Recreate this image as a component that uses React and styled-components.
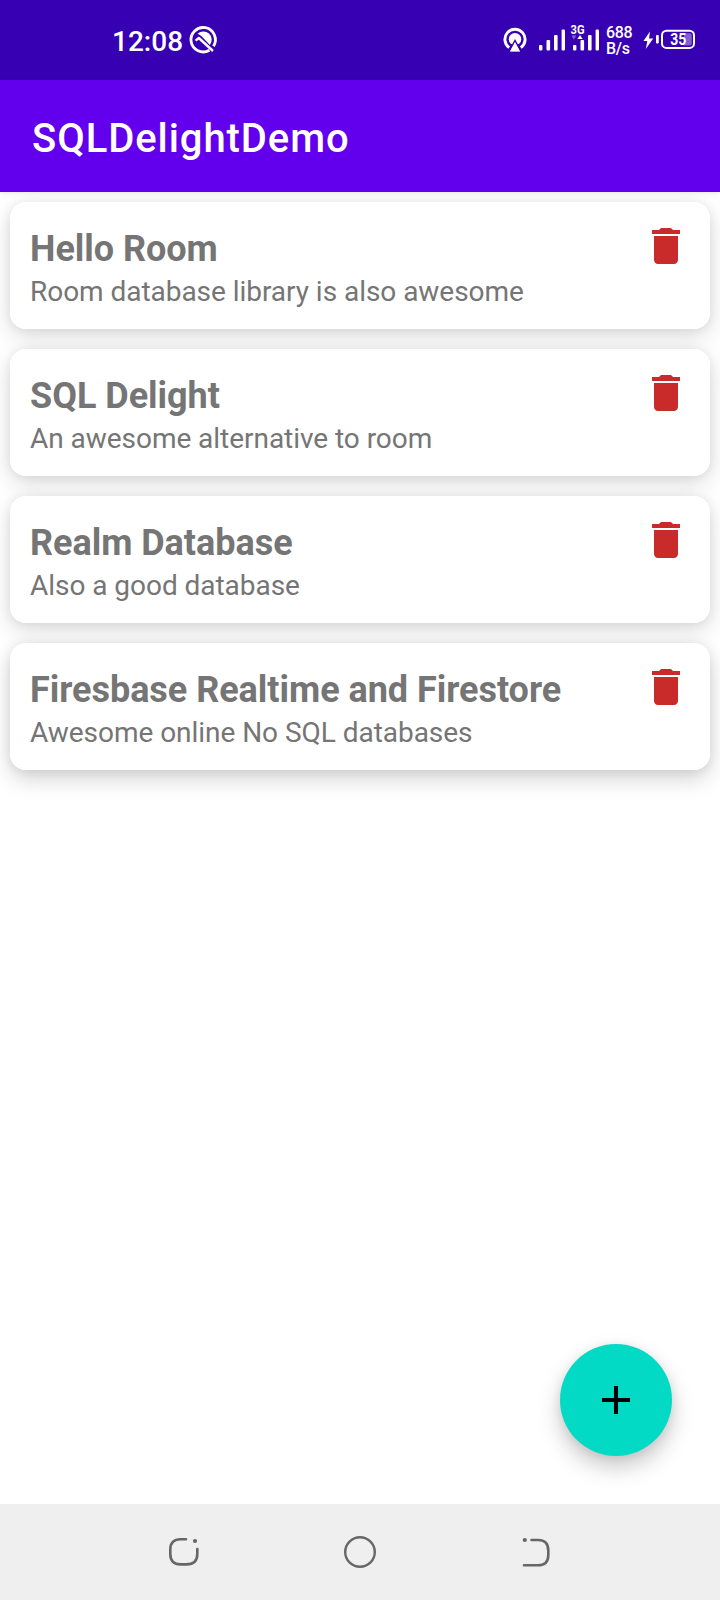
import React from 'react';
import styled, { createGlobalStyle } from 'styled-components';

const GlobalStyle = createGlobalStyle`
  * { box-sizing: border-box; }
  body { margin: 0; background: #fff; font-family: Roboto, sans-serif; }
`;

const Screen = styled.div`
  width: 720px;
  height: 1600px;
  display: flex;
  flex-direction: column;
  background: #fff;
  overflow: hidden;
`;

const StatusBar = styled.header`
  height: 80px;
  flex: none;
  display: flex;
  align-items: center;
  padding: 0 24px 0 112px;
  background: #3700b3;
  color: #fff;
`;

const Clock = styled.span`
  font-size: 28px;
  line-height: 32px;
  font-weight: 500;
  width: 77px;
  padding-top: 4px;
`;

const StatusIcons = styled.div`
  margin-left: auto;
  display: flex;
  align-items: center;
`;

const Glyph = styled.svg`
  display: block;
  flex: none;
  overflow: visible;
  margin-left: ${(p) => p.$gap || 0}px;
`;

const NetSpeed = styled.div`
  width: 37px;
  margin-left: 7px;
  padding-top: 1px;
  font-size: 16px;
  line-height: 16px;
  font-weight: 500;
  letter-spacing: -0.35px;
`;

const AppBar = styled.div`
  position: relative;
  z-index: 1;
  height: 112px;
  flex: none;
  display: flex;
  align-items: center;
  padding: 0 32px;
  background: #6200ee;
  box-shadow: 0 1px 5px rgba(0, 0, 0, 0.1);
`;

const AppTitle = styled.h1`
  margin: 0;
  color: #fff;
  font-size: 40px;
  line-height: 48px;
  padding-top: 6px;
  font-weight: 500;
  letter-spacing: 0.93px;
`;

const Content = styled.main`
  flex: 1;
  display: flex;
  flex-direction: column;
  justify-content: space-between;
`;

const NoteList = styled.ul`
  isolation: isolate;
  list-style: none;
  margin: 0;
  padding: 10px;
  display: flex;
  flex-direction: column;
  gap: 20px;
`;

const NoteCard = styled.li`
  position: relative;
  height: 127px;
  display: flex;
  justify-content: space-between;
  padding: 20px 20px 0;
  border-radius: 16px;
  background: #fff;
  color: #757575;

  &::before {
    content: '';
    position: absolute;
    inset: 0;
    z-index: -1;
    border-radius: inherit;
    box-shadow: 0 8px 24px rgba(0, 0, 0, 0.13), 0 1px 12px rgba(0, 0, 0, 0.08);
  }

  &:last-child::before {
    box-shadow: 0 9px 22px rgba(0, 0, 0, 0.17), 0 1px 12px rgba(0, 0, 0, 0.08);
  }
`;

const NoteTitle = styled.h2`
  margin: 5px 0 0;
  font-size: 36px;
  line-height: 44px;
  font-weight: 700;
  letter-spacing: -0.03px;
`;

const NoteText = styled.p`
  margin: 2px 0 0;
  font-size: 28px;
  line-height: 38px;
  letter-spacing: -0.04px;
`;

const DeleteButton = styled.button`
  width: 48px;
  height: 48px;
  padding: 0;
  border: 0;
  background: none;
`;

const AddButton = styled.button`
  align-self: flex-end;
  width: 112px;
  height: 112px;
  margin: 0 48px 48px 0;
  padding: 0;
  display: grid;
  place-items: center;
  border: 0;
  border-radius: 50%;
  background: #03dac5;
  box-shadow: 0 11px 22px rgba(0, 0, 0, 0.22), 0 1px 10px rgba(0, 0, 0, 0.07);
`;

const NavBar = styled.nav`
  height: 96px;
  flex: none;
  display: grid;
  grid-template-columns: repeat(3, 176px);
  justify-content: center;
  align-items: center;
  justify-items: center;
  background: #efefef;
`;

const notes = [
  { title: 'Hello Room', text: 'Room database library is also awesome' },
  { title: 'SQL Delight', text: 'An awesome alternative to room' },
  { title: 'Realm Database', text: 'Also a good database' },
  { title: 'Firesbase Realtime and Firestore', text: 'Awesome online No SQL databases' },
];

function FocusIcon() {
  return (
    <Glyph width="28" height="28" viewBox="0 0 28 28" fill="none" stroke="#fff">
      <path d="M20.4 24.2A12.2 12.2 0 1 1 24.5 20.2" strokeWidth="2.8" />
      <path d="M8.6 7.8A8.3 8.3 0 0 1 20.9 18.9L12.2 10Q10.4 8.6 8.6 7.8Z" fill="#fff" stroke="none" />
      <path d="M6.6 14.6L9.8 12L24 25" strokeWidth="2.4" strokeLinejoin="round" />
    </Glyph>
  );
}

function HotspotIcon() {
  return (
    <Glyph width="24" height="26" viewBox="0 0 24 26" fill="none">
      <path d="M6.2 20.6A10.1 10.1 0 1 1 17.8 20.6" stroke="#fff" strokeWidth="2.9" />
      <circle cx="12" cy="12.2" r="6.2" fill="#fff" />
      <path d="M12 13.6L18.2 25H5.8Z" fill="#fff" stroke="#3700b3" strokeWidth="1.6" />
      <path d="M12 15L17 24.4H7Z" fill="#fff" />
    </Glyph>
  );
}

function SignalIcon({ gap, children }) {
  return (
    <Glyph $gap={gap} width="26" height="22" viewBox="0 0 26 22" fill="#fff">
      <rect x="0" y="16" width="3.4" height="5.5" rx="1" />
      <rect x="7.5" y="11" width="3.6" height="10.5" rx="1" />
      <rect x="15" y="6" width="3.6" height="15.5" rx="1" />
      <rect x="22.6" y="0.5" width="3.4" height="21" rx="1" />
      {children}
    </Glyph>
  );
}

function BatteryIcon() {
  return (
    <Glyph width="53" height="22" viewBox="0 0 53 22">
      <path d="M7 2.6L0.4 12H4.3L2.8 20L10.2 9.6H6Z" fill="#fff" />
      <rect x="13" y="6" width="2.8" height="8.6" rx="1" fill="#fff" />
      <rect x="19" y="1.7" width="32" height="17.2" rx="4.5" fill="none" stroke="#fff" strokeWidth="2" />
      <path d="M41 4.3H47Q48.8 4.3 48.8 6.3V14.3Q48.8 16.4 47 16.4H41Z" fill="#8360d0" />
      <text x="35.2" y="16.4" textAnchor="middle" fill="#fff" fontSize="16.5" fontWeight="700" textLength="16" lengthAdjust="spacingAndGlyphs">35</text>
    </Glyph>
  );
}

function TrashIcon() {
  return (
    <Glyph width="48" height="48" viewBox="0 0 24 24" fill="#c92a2a">
      <path d="M6 19c0 1.1.9 2 2 2h8c1.1 0 2-.9 2-2V7H6v12zM19 4h-3.5l-1-1h-5l-1 1H5v2h14V4z" />
    </Glyph>
  );
}

export default function App() {
  return (
    <Screen>
      <GlobalStyle />
      <StatusBar>
        <Clock>12:08</Clock>
        <FocusIcon />
        <StatusIcons>
          <HotspotIcon />
          <SignalIcon gap={12} />
          <SignalIcon gap={8}>
            <text x="-2.5" y="4.5" fontSize="13.5" fontWeight="700" textLength="14" lengthAdjust="spacingAndGlyphs">3G</text>
            <path d="M-1.5 6.5H3.2L0.9 10.5Z" opacity="0.4" />
            <path d="M4.4 10L7 6L9.6 10Z" />
          </SignalIcon>
          <NetSpeed>688<br />B/s</NetSpeed>
          <BatteryIcon />
        </StatusIcons>
      </StatusBar>
      <AppBar>
        <AppTitle>SQLDelightDemo</AppTitle>
      </AppBar>
      <Content>
        <NoteList>
          {notes.map((note) => (
            <NoteCard key={note.title}>
              <div>
                <NoteTitle>{note.title}</NoteTitle>
                <NoteText>{note.text}</NoteText>
              </div>
              <DeleteButton aria-label="Delete">
                <TrashIcon />
              </DeleteButton>
            </NoteCard>
          ))}
        </NoteList>
        <AddButton aria-label="Add">
          <Glyph width="48" height="48" viewBox="0 0 24 24">
            <path d="M19 13h-6v6h-2v-6H5v-2h6V5h2v6h6z" />
          </Glyph>
        </AddButton>
      </Content>
      <NavBar>
        <Glyph width="32" height="32" viewBox="0 0 32 32" fill="none" stroke="#666" strokeWidth="2.6" strokeLinecap="round">
          <path d="M18 3.3H12.5Q2.3 3.3 2.3 13.5V18Q2.3 28.4 12.5 28.4H18.5Q29.3 28.4 29.3 18V13" />
          <circle cx="27" cy="5" r="2.1" fill="#666" stroke="none" />
        </Glyph>
        <Glyph width="32" height="32" viewBox="0 0 32 32" fill="none" stroke="#666" strokeWidth="2.4">
          <circle cx="16" cy="16" r="14.8" />
        </Glyph>
        <Glyph width="32" height="32" viewBox="0 0 32 32" fill="none" stroke="#666" strokeWidth="2.6" strokeLinecap="round">
          <path d="M11.5 4H18Q28.3 4 28.3 14.5V19Q28.3 29.3 18 29.3H4" />
          <circle cx="4.8" cy="4" r="2.1" fill="#666" stroke="none" />
        </Glyph>
      </NavBar>
    </Screen>
  );
}
